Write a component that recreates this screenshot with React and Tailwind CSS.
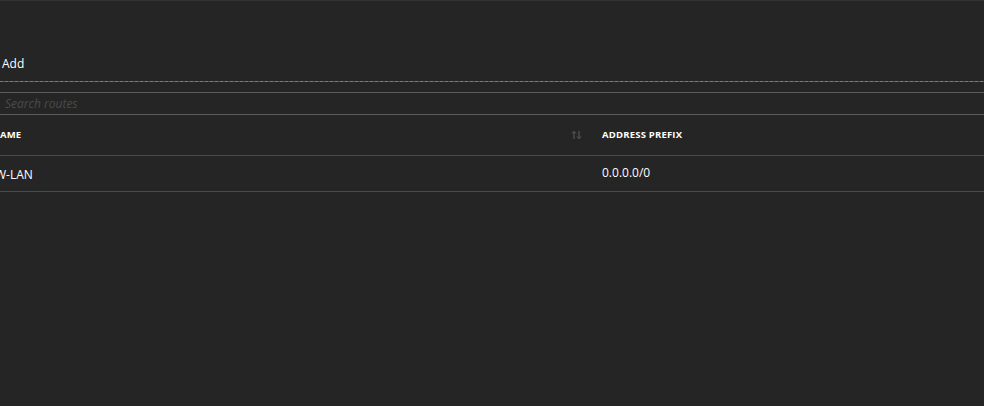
import React from 'react'

const rows = [{ name: 'W-LAN', prefix: '0.0.0.0/0' }]

const SortIcon = () => (
  <svg width="11" height="10" viewBox="0 0 11 10" fill="none" stroke="#5f5f5f" strokeWidth="1">
    <path d="M3 9V1.5M1 3.5l2-2 2 2" />
    <path d="M8 1v7.5M6 6.5l2 2 2-2" />
  </svg>
)

const App = () => {
  return (
    <div className="w-[984px] h-[406px] bg-[#252525] border-t border-[#333333] overflow-hidden text-white font-['Open_Sans',sans-serif]">
      <div className="h-[80px] flex items-end pb-[9px]">
        <span className="ml-[2px] text-[12px] leading-[16px] text-white">Add</span>
      </div>
      <div className="h-px bg-[repeating-linear-gradient(90deg,#1e9bd3_0_3px,#5b5252_3px_5px)]"></div>
      <div className="h-[10px]"></div>
      <div className="border-t border-b border-[#5c5c5c] h-[23px] flex items-center">
        <span className="ml-[5px] text-[12px] italic text-[#4a4a4a]">Search routes</span>
      </div>
      <div className="flex h-[41px] items-center border-b border-[#4a4a4a]">
        <div className="w-[590px] flex items-center justify-between pr-[8px]">
          <span className="-ml-[8px] text-[9.5px] font-bold text-white tracking-[0.2px]">NAME</span>
          <SortIcon />
        </div>
        <div className="pl-[12px] text-[9.5px] font-bold text-white tracking-[0.2px]">ADDRESS PREFIX</div>
      </div>
      {rows.map((r) => (
        <div key={r.name} className="flex h-[36px] items-center border-b border-[#4a4a4a]">
          <div className="w-[590px]">
            <span className="-ml-[5px] inline-block text-[12px] leading-[16px] -translate-y-[1px]">{r.name}</span>
          </div>
          <div className="pl-[12px] text-[12px] leading-[16px] -translate-y-[1px]">{r.prefix}</div>
        </div>
      ))}
    </div>
  )
}

export default App
